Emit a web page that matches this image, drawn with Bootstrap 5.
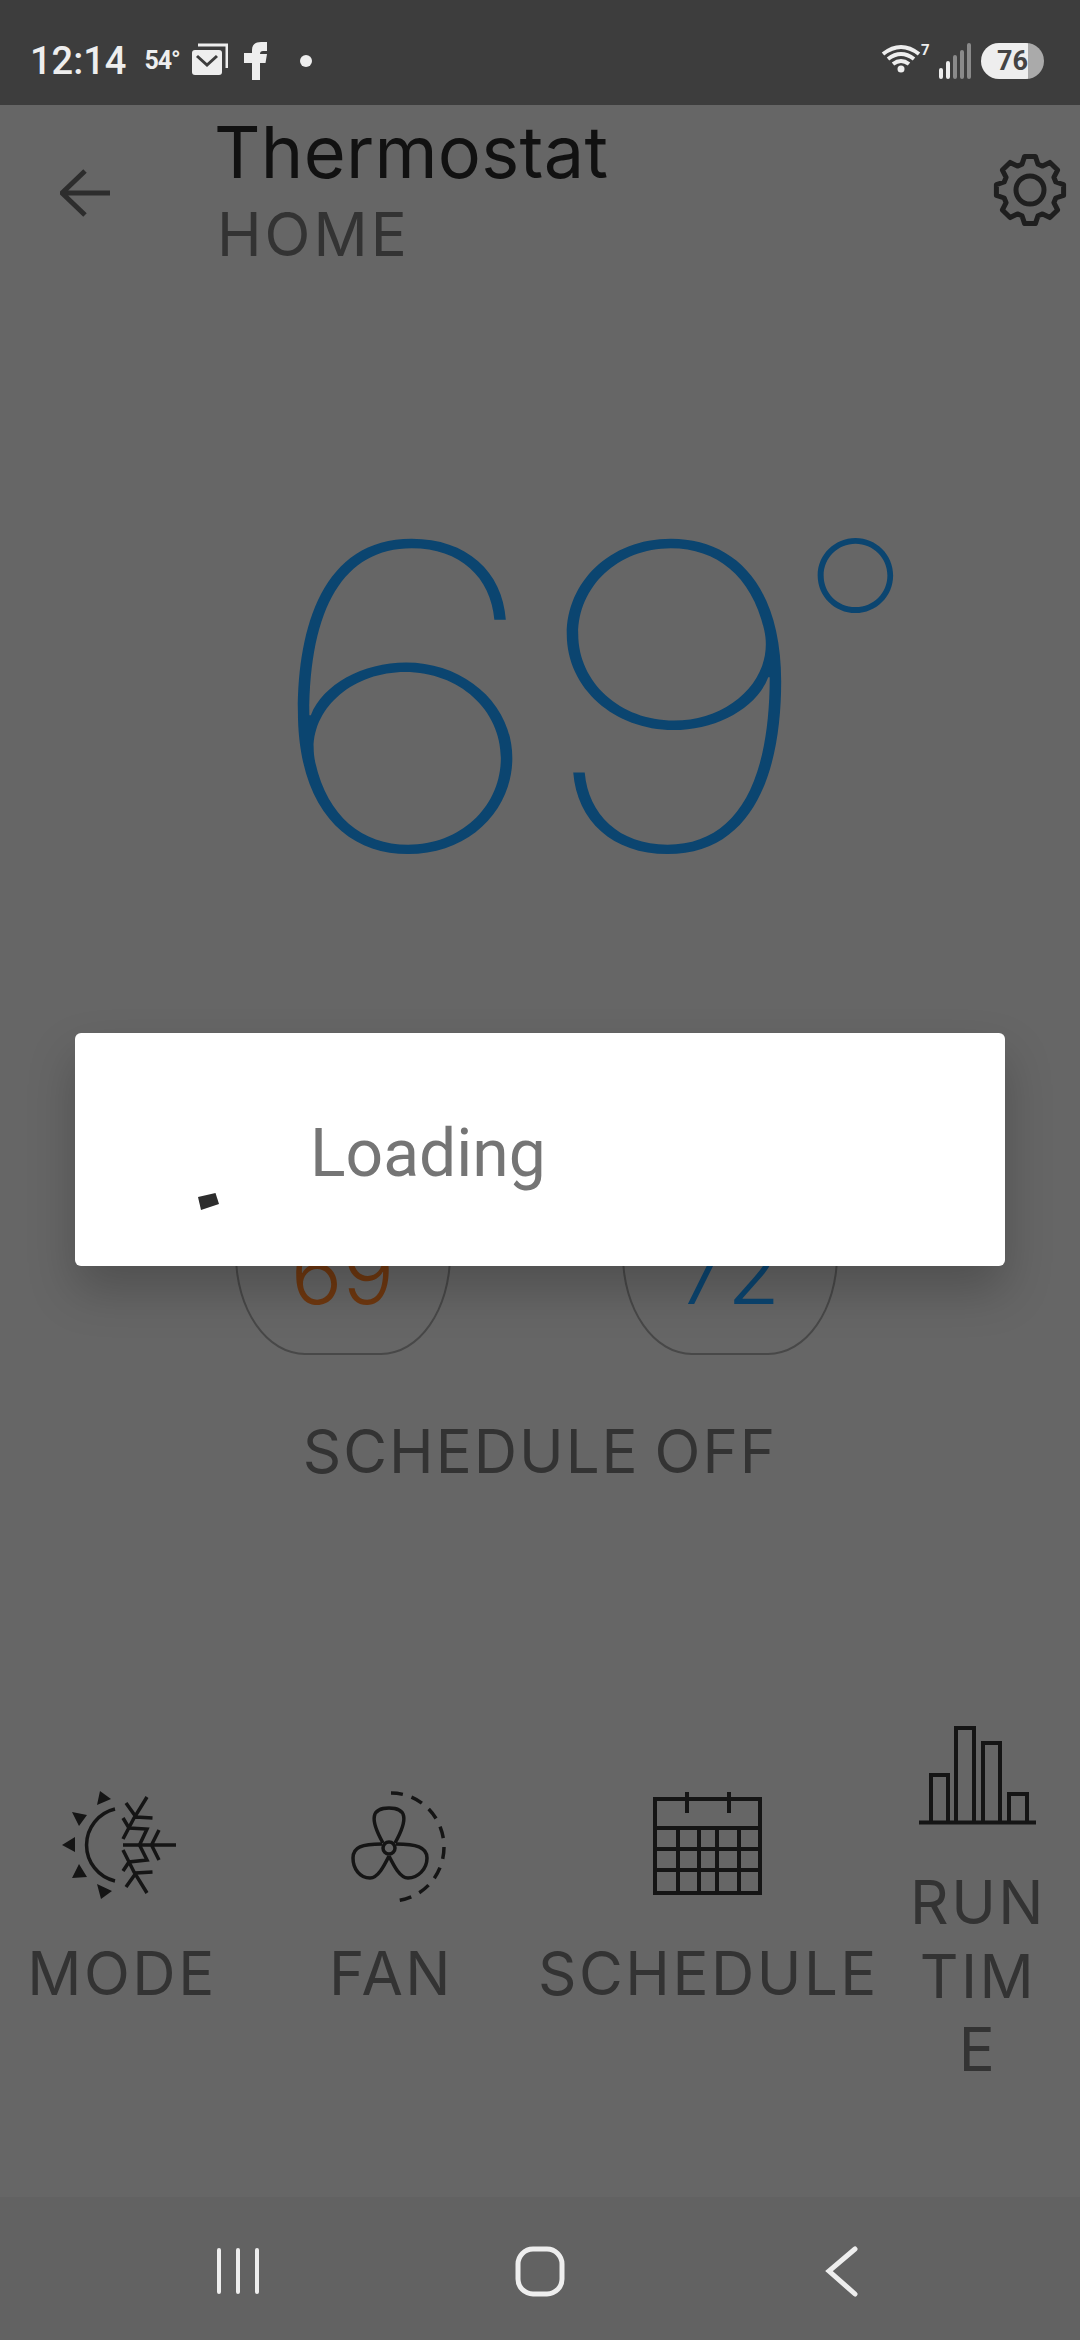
<!DOCTYPE html>
<html lang="en">
<head>
<meta charset="UTF-8">
<meta name="viewport" content="width=device-width, initial-scale=1.0">
<title>Thermostat</title>
<link href="https://cdn.jsdelivr.net/npm/bootstrap@5.3.0/dist/css/bootstrap.min.css" rel="stylesheet">
<style>
    html, body { width: 1080px; height: 2340px; overflow: hidden; }
    body { background: #666; font-family: Inter, "Liberation Sans", sans-serif; position: relative; }
    .status-strip { height: 105px; background: #3d3d3d; color: #eee; font-family: Roboto, sans-serif; padding: 16px 36px 0 30px; }
    .clock-text { font-size: 38px; font-weight: 500; line-height: 1; }
    .temp-small { font-weight: 700; font-size: 25px; letter-spacing: -1px; line-height: 1; margin-left: 18px; }
    .battery-pill { width: 63px; height: 36px; border-radius: 18px; background: linear-gradient(90deg, #eee 0, #eee 47px, #aaa 47px); color: #444; font-weight: 700; font-size: 27px; line-height: 36px; text-align: center; }
    .title-bar { height: 175px; padding: 0 12px 0 60px; }
    .title-main { font-size: 72px; font-weight: 400; letter-spacing: .3px; color: #111; line-height: 80px; }
    .title-sub { font-size: 60px; font-weight: 400; letter-spacing: 3px; color: #333; line-height: 70px; margin: 7px 0 0 3px; }
    .title-block { margin: -5px 0 0 104px; }
    .big-temp { color: #0b4570; line-height: 1; margin-top: 206px; padding-left: 261px; height: 403px; }
    .temp-digits { display: inline-block; font-size: 422px; font-weight: 115; letter-spacing: -16px; transform: scaleX(1.21); transform-origin: left; }
    .temp-degree { font-size: 255px; font-weight: 115; margin: 20px 0 0 92px; }
    .setpoint-row { gap: 171px; margin-top: 266px; padding-right: 8px; }
    .setpoint-pill { width: 216px; height: 200px; padding-top: 36px; border: 2px solid #484848; border-radius: 70px / 100px; font-size: 86px; font-weight: 300; line-height: 1; }
    .heat-text { color: #6f3810; }
    .cool-text { color: #0b4570; }
    .schedule-state { font-size: 60px; font-weight: 400; letter-spacing: 2px; word-spacing: -4px; color: #333; line-height: 70px; margin-top: 61px; }
    .action-row { height: 350px; margin-top: 237px; }
    .action-col { text-align: center; color: #333; font-size: 60px; font-weight: 400; letter-spacing: 2.5px; line-height: 73.5px; flex: none; }
    .action-col svg { display: block; margin: 0 auto; }
    .nav-strip { position: absolute; left: 0; right: 0; bottom: 0; height: 143px; background: #626262; }
    .loading-box { position: absolute; left: 75px; top: 1033px; width: 930px; height: 233px; background: #fff; border-radius: 6px; box-shadow: 0 24px 48px rgba(0,0,0,.22); }
    .loading-text { font-family: Roboto, sans-serif; font-size: 66px; color: #757575; line-height: 1; padding-top: 8px; }
</style>
</head>
<body>

<div class="status-strip d-flex align-items-center">
    <span class="clock-text">12:14</span>
    <span class="temp-small">54°</span>
    <svg class="ms-2" width="40" height="40" viewBox="188 43 40 40">
        <path d="M198 47h29v23" fill="none" stroke="#eee" stroke-width="3"/>
        <rect x="192" y="52" width="30" height="25" rx="3" fill="#eee"/>
        <path d="M197 58l10 9 10-9" fill="none" stroke="#3d3d3d" stroke-width="3"/>
    </svg>
    <svg class="ms-3" width="24" height="38" viewBox="245 45 24 38"><path d="M253 83V66h-8V56h8v-3c0-6 4-8 9-8h6v9h-4c-2 0-3 1-3 3v0h7l-1.500 9H261v17z" fill="#eee"/></svg>
    <svg style="margin-left:32px" width="12" height="12"><circle cx="6" cy="6" r="6" fill="#eee"/></svg>
    <div class="ms-auto d-flex align-items-center">
        <svg width="50" height="40" viewBox="880 43 50 40">
            <g fill="none" stroke="#eee" stroke-width="4">
                <path d="M882 56q18-14 36 0"/><path d="M887 61q13-10 26 0"/><path d="M892 66q8-6 16 0"/>
            </g>
            <circle cx="900" cy="71" r="3.500" fill="#eee"/>
            <text x="920" y="57" font-size="15" font-weight="700" fill="#eee" font-family="Roboto, sans-serif">7</text>
        </svg>
        <svg class="ms-2" width="34" height="36" viewBox="938 44 34 36">
            <g stroke-width="4" stroke-linecap="round">
                <path d="M940 71v7M947 64v14" stroke="#eee"/>
                <path d="M954 58v20M961 53v25M968 46v32" stroke="#8a8a8a"/>
            </g>
        </svg>
        <div class="battery-pill ms-2">76</div>
    </div>
</div>

<div class="title-bar d-flex align-items-center">
    <svg width="50" height="48" viewBox="59 165 50 48"><path d="M84 167l-23 22 23 22M62 189h47" fill="none" stroke="#2d2d2d" stroke-width="5"/></svg>
    <div class="title-block flex-grow-1">
        <div class="title-main">Thermostat</div>
        <div class="title-sub">HOME</div>
    </div>
    <svg width="76" height="76" viewBox="-38 -38 76 76" style="margin-top:-6px">
        <path id="gear" fill="none" stroke="#1f1f1f" stroke-width="5" stroke-linejoin="round"/>
        <circle r="14" fill="none" stroke="#1f1f1f" stroke-width="5"/>
    </svg>
</div>

<div class="big-temp d-flex align-items-start">
    <span class="temp-digits">69</span>
    <span class="temp-degree">°</span>
</div>

<div class="setpoint-row d-flex justify-content-center">
    <div class="setpoint-pill heat-text d-flex align-items-center justify-content-center">69</div>
    <div class="setpoint-pill cool-text d-flex align-items-center justify-content-center">72</div>
</div>

<div class="schedule-state text-center">SCHEDULE OFF</div>

<div class="action-row d-flex align-items-center">
    <div class="action-col" style="width:244px">
        <svg width="118" height="114" viewBox="60 1788 118 114" style="margin:3px 0 35px 60px">
            <path d="M100 1791l11 8-14 6zM72 1812l15 3-8 11zM62 1845l13-8v15zM72 1878l15-1-8-13zM97 1884l15 7-11 8z" fill="#151515"/>
            <g fill="none" stroke="#151515" stroke-width="3.500">
                <path d="M115 1809a37 37 0 0 0 0 72"/>
                <path d="M123 1845h53M159 1830l-7.500 15 7.500 15"/>
                <path d="M147 1797l-13 21-11 21M126 1803l10 14 16.500 1"/>
                <path d="M123 1818l6 10 18 1-7.500 16 7.500 15-18 2-6 9"/>
                <path d="M147 1893l-13-21-11-22M126 1887l10-14 16.500-1"/>
            </g>
        </svg>
        <div>MODE</div>
    </div>
    <div class="action-col" style="width:294px">
        <svg width="96" height="112" viewBox="351 1790 96 112" style="margin:6px 0 34px 107px">
            <g fill="none" stroke="#151515" stroke-width="3.500">
                <path d="M391 1792a53 54 0 0 1 0 108" stroke-dasharray="12 9"/>
                <circle cx="389" cy="1847" r="6"/>
                <path d="M383 1842C369 1817 372 1807 389 1807S409 1817 395 1842"/>
                <path d="M382 1843C362 1843 353 1846 353 1857C353 1868 360 1877 370 1877C378 1877 384 1865 389 1855"/>
                <path d="M396 1843C416 1843 427 1846 427 1857C427 1868 418 1877 408 1877C400 1877 394 1865 389 1855"/>
            </g>
        </svg>
        <div>FAN</div>
    </div>
    <div class="action-col" style="width:340px">
        <svg width="112" height="104" viewBox="652 1794 112 104" style="margin:5px auto 42px">
            <g fill="none" stroke="#151515" stroke-width="4">
                <rect x="655" y="1802" width="105" height="94"/>
                <path d="M655 1831h105M655 1852h105M655 1873h105M678 1831v65M699 1831v65M717 1831v65M739 1831v65M687 1795v21M729 1795v21"/>
            </g>
        </svg>
        <div>SCHEDULE</div>
    </div>
    <div class="action-col" style="width:136px;margin:16px 0 0 32px">
        <svg width="118" height="100" viewBox="920 1727 118 100" style="margin-bottom:41px">
            <g fill="none" stroke="#151515" stroke-width="4">
                <path d="M920 1824.500h117"/>
                <path d="M932 1824v-47h17v47M957 1824v-94h18v94M984 1824v-79h17v79M1010 1824v-28h18v28"/>
            </g>
        </svg>
        <div class="text-break">RUN TIME</div>
    </div>
</div>

<div class="nav-strip d-flex">
    <svg width="1080" height="143" viewBox="0 2197 1080 143">
        <g fill="none" stroke="#eee" stroke-linecap="round">
            <path d="M219 2250v42M238 2250v42M257 2250v42" stroke-width="4"/>
            <rect x="518" y="2249" width="44" height="45" rx="15" stroke-width="5"/>
            <path d="M855 2249l-26 22 26 23" stroke-width="5"/>
        </g>
    </svg>
</div>

<div class="loading-box d-flex align-items-center">
    <svg width="235" height="233" class="flex-shrink-0"><path d="M123 164l17.500-4 3.500 11-18 6z" fill="#2d2d2d"/></svg>
    <span class="loading-text">Loading</span>
</div>

<script src="https://cdn.jsdelivr.net/npm/bootstrap@5.3.0/dist/js/bootstrap.bundle.min.js"></script>
<script>
    // gear outline, 8 teeth
    let d = '';
    for (let i = 0; i < 8; i++) {
        const a = i * Math.PI / 4 - Math.PI / 2;
        [[-0.30, 27], [-0.16, 34], [0.16, 34], [0.30, 27]].forEach(([off, r], j) => {
            const x = (r * Math.cos(a + off)).toFixed(1);
            const y = (r * Math.sin(a + off)).toFixed(1);
            d += (i === 0 && j === 0 ? 'M' : 'L') + x + ' ' + y;
        });
    }
    document.getElementById('gear').setAttribute('d', d + 'Z');
</script>
</body>
</html>
